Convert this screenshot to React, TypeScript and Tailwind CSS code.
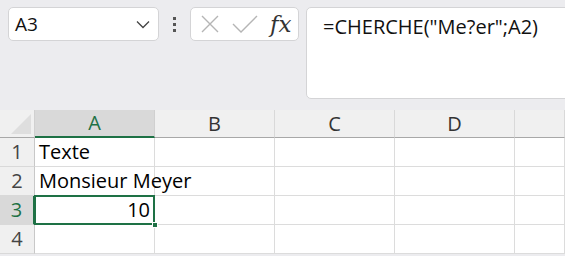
const cols = ["A", "B", "C", "D", ""];

const rows: { n: number; a?: string; right?: boolean }[] = [
  { n: 1, a: "Texte" },
  { n: 2, a: "Monsieur Meyer" },
  { n: 3, a: "10", right: true },
  { n: 4 },
];

export default function App() {
  return (
    <div
      className="w-[565px] h-[256px] overflow-hidden bg-[#ececef] text-[#111]"
      style={{ fontFamily: '"Open Sans", "Noto Sans", sans-serif' }}
    >
      {/* formula bar */}
      <div className="flex items-start h-[110px] pt-[7px] pl-[8px]">
        <div className="flex shrink-0 items-center justify-between w-[151px] h-[34px] bg-white border border-[#d4d4d6] rounded-[5px] pl-[6px] pr-[8px]">
          <span className="text-[19px] leading-none">A3</span>
          <svg width="14" height="9" viewBox="0 0 14 9" fill="none" stroke="#444" strokeWidth="1.3">
            <path d="M1 1.5 L7 7.5 L13 1.5" />
          </svg>
        </div>
        <div className="w-[31px] shrink-0 h-[34px] flex flex-col items-center justify-center gap-[3px]">
          <span className="block w-[3px] h-[3px] bg-[#555]" />
          <span className="block w-[3px] h-[3px] bg-[#555]" />
          <span className="block w-[3px] h-[3px] bg-[#555]" />
        </div>
        <div className="flex shrink-0 items-center w-[109px] h-[34px] bg-white border border-[#d4d4d6] rounded-[5px] pl-[9px]">
          <svg width="20" height="20" viewBox="0 0 20 20" stroke="#b5b5b5" strokeWidth="1.4" fill="none">
            <path d="M2 2 L18 18 M18 2 L2 18" />
          </svg>
          <svg className="ml-[12px]" width="26" height="20" viewBox="0 0 26 20" stroke="#b5b5b5" strokeWidth="1.4" fill="none">
            <path d="M1 10 L9 18 L25 2" />
          </svg>
          <span
            className="ml-[12px] text-[23px] italic leading-none text-[#333]"
            style={{ fontFamily: '"DejaVu Serif", "Liberation Serif", serif' }}
          >
            fx
          </span>
        </div>
        <div className="ml-[7px] w-[300px] h-[92px] shrink-0 bg-white border border-[#d4d4d6] rounded-[5px] pl-[16px] pt-[4px]">
          <span className="text-[20px]">=CHERCHE("Me?er";A2)</span>
        </div>
      </div>

      {/* sheet */}
      <div className="grid grid-cols-[35px_120px_120px_120px_120px_1fr] bg-white">
        <div className="h-[28px] bg-[#f0f0f0] border-r border-[#d0d0d0] border-b border-b-[#a8a8a8] relative">
          <div className="absolute right-[3px] bottom-[3px] w-0 h-0 border-l-[20px] border-l-transparent border-b-[20px] border-b-[#dedede]" />
        </div>
        {cols.map((c, i) => (
          <div
            key={i}
            className={
              i === 0
                ? "h-[28px] flex items-center justify-center bg-[#d9d9d9] border-r border-[#d0d0d0] border-b-2 border-b-[#1e7145] text-[#1e7145] text-[20px]"
                : "h-[28px] flex items-center justify-center bg-[#f0f0f0] border-r border-[#d9d9d9] border-b border-b-[#a8a8a8] text-[#333] text-[20px]"
            }
          >
            {c}
          </div>
        ))}
        {rows.map((r) => (
          <div key={r.n} className="contents">
            <div
              className={
                r.n === 3
                  ? "h-[29px] flex items-center justify-center bg-[#d9d9d9] border-r-2 border-r-[#1e7145] border-b border-b-[#d9d9d9] text-[#1e7145] text-[20px]"
                  : "h-[29px] flex items-center justify-center bg-[#f0f0f0] border-r border-r-[#c8c8c8] border-b border-b-[#d9d9d9] text-[#444] text-[20px]"
              }
            >
              {r.n}
            </div>
            {cols.map((_, i) => (
              <div
                key={i}
                className={
                  "h-[29px] border-r border-b border-[#dcdcdc] relative flex items-center text-[20px] text-black whitespace-nowrap " +
                  (r.right ? "justify-end pr-[4px]" : "pl-[4px]")
                }
              >
                {i === 0 && r.a}
                {i === 0 && r.n === 3 && (
                  <>
                    <div className="absolute -left-px -top-px -right-px -bottom-px border-2 border-[#1e7145]" />
                    <div className="absolute -right-[4px] -bottom-[4px] w-[6px] h-[6px] bg-[#1e7145] border border-white z-10" />
                  </>
                )}
              </div>
            ))}
          </div>
        ))}
      </div>
    </div>
  );
}
